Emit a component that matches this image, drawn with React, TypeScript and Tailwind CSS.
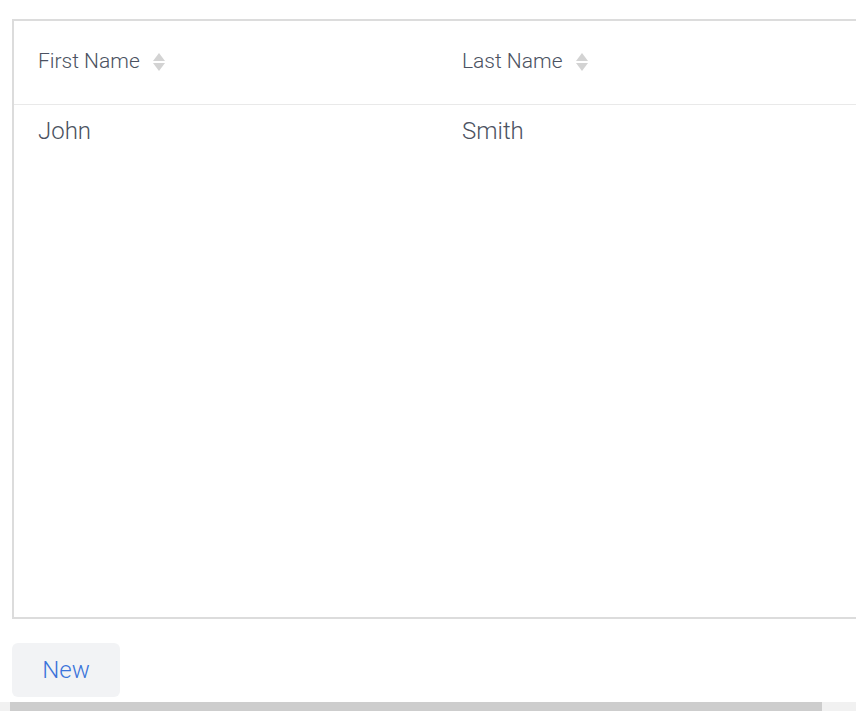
import { useState } from "react";

type Person = { first: string; last: string };

const people: Person[] = [{ first: "John", last: "Smith" }];

function SortIcon() {
  return (
    <svg width="14" height="20" viewBox="0 0 14 20" className="ml-[12px] shrink-0">
      <path d="M7 1 L13 9 L1 9 Z" fill="#d3d3d3" />
      <path d="M1 11 L13 11 L7 19 Z" fill="#d3d3d3" />
    </svg>
  );
}

export default function App() {
  const [rows] = useState<Person[]>(people);

  return (
    <div className="w-[856px] h-[711px] overflow-hidden bg-white flex flex-col font-['Roboto',sans-serif]">
      <div className="pl-3 pt-[19px]">
        <div className="w-[1100px] h-[600px] border-2 border-[#dcdcdc] flex flex-col">
          <div className="flex h-[84px] pb-[1px] border-b border-[#e9e9e9] items-center text-[21px] font-light text-[#4b5261]">
            <div className="w-[424px] pl-[24px] flex items-center">
              First Name
              <SortIcon />
            </div>
            <div className="w-[424px] pl-[24px] flex items-center">
              Last Name
              <SortIcon />
            </div>
          </div>
          {rows.map((row) => (
            <div key={row.first} className="flex h-[52px] items-center text-[24px] font-light text-[#4b5261]">
              <div className="w-[424px] pl-[24px]">{row.first}</div>
              <div className="w-[424px] pl-[24px]">{row.last}</div>
            </div>
          ))}
        </div>
      </div>
      <div className="pl-3 pt-6">
        <button className="w-[108px] h-[54px] rounded-md bg-[#f2f3f5] text-[24px] font-light text-[#3b74da]">
          New
        </button>
      </div>
      {/* horizontal scrollbar */}
      <div className="mt-auto h-[9px] bg-[#f1f1f1] flex">
        <div className="ml-[10px] w-[812px] bg-[#cdcdcd]" />
      </div>
    </div>
  );
}
